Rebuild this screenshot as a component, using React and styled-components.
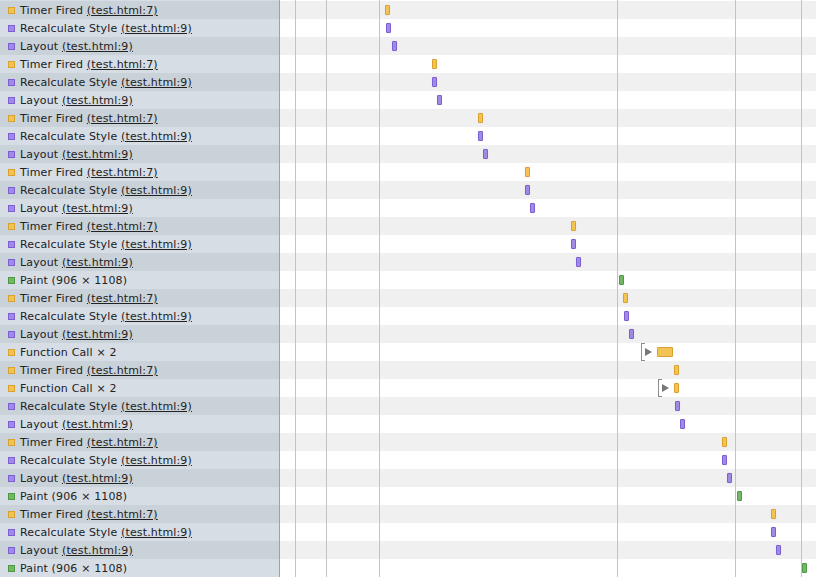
import React from "react";
import styled, { createGlobalStyle } from "styled-components";

const GlobalStyle = createGlobalStyle`
  html, body {
    margin: 0;
    padding: 0;
    background: #ffffff;
    overflow: hidden;
  }
`;

const COLORS = {
  timer: { fill: "#f3c353", border: "#d9a22e" },
  style: { fill: "#a08ae6", border: "#7b5fd3" },
  layout: { fill: "#a08ae6", border: "#7b5fd3" },
  paint: { fill: "#74b866", border: "#4d9a45" },
  func: { fill: "#f3c353", border: "#d9a22e" },
};

const GRID_LINES = [15, 46, 99, 337, 455, 521];

const RECORDS = [
  { type: "timer", x: 105 },
  { type: "style", x: 106 },
  { type: "layout", x: 112 },
  { type: "timer", x: 152 },
  { type: "style", x: 152 },
  { type: "layout", x: 157 },
  { type: "timer", x: 198 },
  { type: "style", x: 198 },
  { type: "layout", x: 203 },
  { type: "timer", x: 245 },
  { type: "style", x: 245 },
  { type: "layout", x: 250 },
  { type: "timer", x: 291 },
  { type: "style", x: 291 },
  { type: "layout", x: 296 },
  { type: "paint", x: 339 },
  { type: "timer", x: 343 },
  { type: "style", x: 344 },
  { type: "layout", x: 349 },
  { type: "func", x: 377, w: 16, bracket: 361 },
  { type: "timer", x: 394 },
  { type: "func", x: 394, bracket: 378 },
  { type: "style", x: 395 },
  { type: "layout", x: 400 },
  { type: "timer", x: 442 },
  { type: "style", x: 442 },
  { type: "layout", x: 447 },
  { type: "paint", x: 457 },
  { type: "timer", x: 491 },
  { type: "style", x: 491 },
  { type: "layout", x: 496 },
  { type: "paint", x: 522 },
];

const Page = styled.div`
  display: flex;
  width: 816px;
  height: 577px;
  overflow: hidden;
  font-family: "Lucida Grande", "DejaVu Sans", sans-serif;
  font-size: 11px;
  letter-spacing: 0.15px;
  color: #222;
`;

const Sidebar = styled.div`
  width: 279px;
  flex: none;
  padding-top: 1px;
  background: #d6dde5;
  border-right: 1px solid #9ba2aa;
`;

const Label = styled.div`
  display: flex;
  align-items: center;
  height: 18px;
  padding-left: 8px;
  gap: 5px;
  white-space: nowrap;
  background: ${(p) => (p.$even ? "#c9d1d9" : "#d6dde5")};
`;

const Swatch = styled.span`
  width: 5px;
  height: 5px;
  flex: none;
  background: ${(p) => COLORS[p.$type].fill};
  border: 1px solid ${(p) => COLORS[p.$type].border};
`;

const Link = styled.span`
  text-decoration: underline;
`;

const Timeline = styled.div`
  position: relative;
  flex: 1;
  padding-top: 1px;
  background: #ffffff;
`;

const Track = styled.div`
  position: relative;
  height: 18px;
  background: ${(p) => (p.$even ? "#f0f0f0" : "#ffffff")};
`;

const GridLine = styled.div`
  position: absolute;
  top: 0;
  bottom: 0;
  width: 1px;
  background: #c3c3c3;
`;

const Bar = styled.div`
  position: absolute;
  top: 4px;
  height: 8px;
  box-sizing: content-box;
  background: ${(p) => COLORS[p.$type].fill};
  border: 1px solid ${(p) => COLORS[p.$type].border};
  border-radius: 1px;
  box-shadow: 0 0 1px rgba(0, 0, 0, 0.12);
`;

const Bracket = styled.div`
  position: absolute;
  top: 0;
  height: 16px;
  width: 3px;
  border: 1px solid #8e8e8e;
  border-right: none;
`;

const Arrow = styled.div`
  position: absolute;
  top: 5px;
  width: 0;
  height: 0;
  border-top: 4px solid transparent;
  border-bottom: 4px solid transparent;
  border-left: 7px solid #777;
`;

function labelFor(type) {
  switch (type) {
    case "timer":
      return (
        <>
          Timer Fired <Link>(test.html:7)</Link>
        </>
      );
    case "style":
      return (
        <>
          Recalculate Style <Link>(test.html:9)</Link>
        </>
      );
    case "layout":
      return (
        <>
          Layout <Link>(test.html:9)</Link>
        </>
      );
    case "paint":
      return <>Paint (906 × 1108)</>;
    default:
      return <>Function Call × 2</>;
  }
}

export default function App() {
  return (
    <Page>
      <GlobalStyle />
      <Sidebar>
        {RECORDS.map((r, i) => (
          <Label key={i} $even={i % 2 === 0}>
            <Swatch $type={r.type} />
            <span>{labelFor(r.type)}</span>
          </Label>
        ))}
      </Sidebar>
      <Timeline>
        {RECORDS.map((r, i) => (
          <Track key={i} $even={i % 2 === 0}>
            {r.bracket != null && (
              <>
                <Bracket style={{ left: r.bracket }} />
                <Arrow style={{ left: r.bracket + 4 }} />
              </>
            )}
            <Bar $type={r.type} style={{ left: r.x, width: (r.w || 5) - 2 }} />
          </Track>
        ))}
        {GRID_LINES.map((x) => (
          <GridLine key={x} style={{ left: x }} />
        ))}
      </Timeline>
    </Page>
  );
}
